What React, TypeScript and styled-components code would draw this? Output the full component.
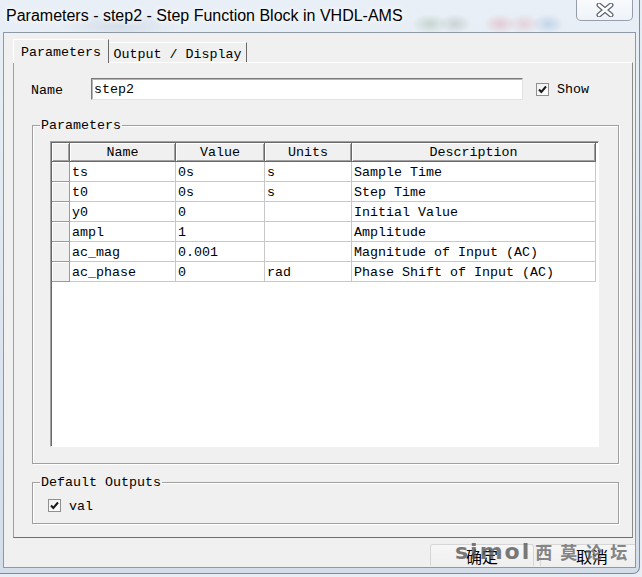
import * as React from "react";
import styled, { createGlobalStyle } from "styled-components";

const MONO = `"Liberation Mono", "DejaVu Sans Mono", monospace`;
const CJK = `"Noto Sans CJK SC", "Liberation Sans", sans-serif`;

const GlobalStyle = createGlobalStyle`
    html, body {
        margin: 0;
        padding: 0;
        background: #dfe7f0;
    }
    body {
        font-family: ${MONO};
        font-size: 13.333px;
        color: #000;
    }
`;

interface ParamRow {
    name: string;
    value: string;
    units: string;
    description: string;
}

const rows: ParamRow[] = [
    { name: "ts", value: "0s", units: "s", description: "Sample Time" },
    { name: "t0", value: "0s", units: "s", description: "Step Time" },
    { name: "y0", value: "0", units: "", description: "Initial Value" },
    { name: "ampl", value: "1", units: "", description: "Amplitude" },
    { name: "ac_mag", value: "0.001", units: "", description: "Magnitude of Input (AC)" },
    { name: "ac_phase", value: "0", units: "rad", description: "Phase Shift of Input (AC)" },
];

const Screen = styled.div`
    width: 642px;
    height: 577px;
    overflow: hidden;
    background: linear-gradient(180deg, #e6edf5 0%, #d9e3ee 40%, #e8eef4 100%);
`;

const Frame = styled.div`
    width: 640px;
    height: 574px;
    box-sizing: border-box;
    display: flex;
    flex-direction: column;
    border-right: 1px solid #7f8c99;
    border-bottom: 1px solid #7f8c99;
    border-bottom-right-radius: 7px;
    background:
        radial-gradient(ellipse 18px 10px at 430px 24px, rgba(110, 150, 110, 0.28), transparent),
        radial-gradient(ellipse 16px 10px at 455px 24px, rgba(100, 115, 100, 0.22), transparent),
        radial-gradient(ellipse 16px 10px at 500px 24px, rgba(215, 120, 135, 0.3), transparent),
        radial-gradient(ellipse 16px 10px at 524px 24px, rgba(215, 130, 145, 0.26), transparent),
        radial-gradient(ellipse 16px 10px at 548px 24px, rgba(90, 140, 200, 0.26), transparent),
        radial-gradient(ellipse 60px 14px at 120px 26px, rgba(150, 170, 195, 0.25), transparent),
        linear-gradient(180deg, #e9eff6 0%, #d3deea 100%);
`;

const TitleBar = styled.div`
    height: 32px;
    display: flex;
    align-items: flex-start;
    flex-shrink: 0;
`;

const Title = styled.div`
    padding-left: 6px;
    line-height: 32px;
    font-family: "Liberation Sans", Arial, sans-serif;
    font-size: 16px;
    color: #000;
    text-shadow: 0 0 6px #fff, 0 0 10px #fff;
    white-space: nowrap;
`;

const CloseButton = styled.div`
    margin-left: auto;
    margin-right: 6px;
    width: 57px;
    height: 21px;
    box-sizing: border-box;
    border: 1px solid rgba(70, 84, 104, 0.55);
    border-top: none;
    border-radius: 0 0 5px 5px;
    background: linear-gradient(180deg, rgba(255, 255, 255, 0.7), rgba(255, 255, 255, 0.3));
    display: flex;
    align-items: center;
    justify-content: center;
`;

const Client = styled.div`
    position: relative;
    margin-left: 3px;
    width: 633px;
    height: 536px;
    box-sizing: border-box;
    border: 1px solid #8d99a6;
    background: #f0f0f0;
    padding: 6px 0 0 9px;
    display: flex;
    flex-direction: column;
    overflow: hidden;
`;

const TabStrip = styled.div`
    height: 23px;
    display: flex;
    align-items: flex-end;
`;

const Tab = styled.div<{ $active?: boolean }>`
    position: relative;
    z-index: 1;
    box-sizing: border-box;
    display: flex;
    justify-content: center;
    align-items: flex-start;
    background: #f0f0f0;
    white-space: nowrap;
    line-height: 16px;
    width: ${(p) => (p.$active ? 96 : 138)}px;
    height: ${(p) => (p.$active ? 24 : 20)}px;
    margin-bottom: ${(p) => (p.$active ? -1 : 0)}px;
    padding-top: ${(p) => (p.$active ? 5 : 4)}px;
    border-top: 1px solid #fff;
    border-left: ${(p) => (p.$active ? "1px solid #fff" : "none")};
    border-right: 1px solid #696969;
`;

const Pane = styled.div`
    width: 620px;
    height: 476px;
    box-sizing: border-box;
    border-top: 1px solid #fff;
    border-left: 1px solid #a0a0a0;
    border-right: 1px solid #8a8a8a;
    border-bottom: 1px solid #6e6e6e;
    padding: 15px 0 0 17px;
    display: flex;
    flex-direction: column;
    flex-shrink: 0;
`;

const NameRow = styled.div`
    display: flex;
    align-items: center;
    height: 22px;
`;

const FieldLabel = styled.div`
    width: 60px;
    padding-top: 3px;
    line-height: 17px;
`;

const TextInput = styled.div`
    width: 432px;
    height: 22px;
    box-sizing: border-box;
    border: 1px solid;
    border-color: #7a7a7a #e3e3e3 #e3e3e3 #7a7a7a;
    box-shadow: inset 1px 1px 0 #b5b5b5;
    background: #fff;
    padding: 2px 0 0 2px;
    line-height: 18px;
`;

const CheckBox = styled.div<{ $gap: number }>`
    width: 13px;
    height: 13px;
    box-sizing: border-box;
    margin-left: ${(p) => p.$gap}px;
    border: 1px solid #8e8f8f;
    background: linear-gradient(135deg, #f0f0f0, #fff);
    display: flex;
    align-items: center;
    justify-content: center;
    flex-shrink: 0;
`;

const CheckLabel = styled.div`
    margin-left: 8px;
    padding-top: 2px;
    line-height: 16px;
`;

const GroupBox = styled.div<{ $bottom: number; $top: number }>`
    margin-left: 1px;
    margin-top: ${(p) => p.$top}px;
    width: 587px;
    box-sizing: border-box;
    border: 1px solid #a0a0a0;
    box-shadow: inset 1px 1px 0 #fff, 1px 1px 0 #fff;
    padding-bottom: ${(p) => p.$bottom}px;
    display: flex;
    flex-direction: column;
`;

const Caption = styled.div`
    align-self: flex-start;
    margin: -9px 0 0 7px;
    padding: 1px 1px 0;
    height: 16px;
    box-sizing: border-box;
    line-height: 16px;
    background: #f0f0f0;
`;

const GridFrame = styled.div`
    margin: 8px 0 0 17px;
    width: 549px;
    height: 306px;
    box-sizing: border-box;
    border: 1px solid;
    border-color: #a0a0a0 #fff #fff #a0a0a0;
    box-shadow: inset 1px 1px 0 #696969;
    padding: 1px 0 0 1px;
    background: #fff;
`;

const Grid = styled.div`
    display: grid;
    grid-template-columns: 18px 106px 89px 87px 244px;
    grid-template-rows: 19px;
    grid-auto-rows: 20px;
`;

const HeadCell = styled.div`
    box-sizing: border-box;
    background: #f0f0f0;
    border-right: 1px solid #696969;
    border-bottom: 1px solid #696969;
    box-shadow: inset 1px 1px 0 #fff, inset -1px -1px 0 #a0a0a0;
    text-align: center;
    padding-top: 2px;
    line-height: 16px;
    white-space: nowrap;
    overflow: hidden;
`;

const RowHead = styled.div`
    box-sizing: border-box;
    background: #f0f0f0;
    border-right: 1px solid #9a9a9a;
    border-bottom: 1px solid #9a9a9a;
    box-shadow: inset 1px 1px 0 #fff;
`;

const Cell = styled.div`
    box-sizing: border-box;
    border-right: 1px solid #c8c8c8;
    border-bottom: 1px solid #c8c8c8;
    padding: 2px 0 0 2px;
    line-height: 17px;
    white-space: nowrap;
    overflow: hidden;
`;

const OutputRow = styled.div`
    display: flex;
    align-items: center;
    margin: 9px 0 0 15px;
    height: 13px;
`;

const ButtonRow = styled.div`
    display: flex;
    gap: 6px;
    margin-top: 6px;
    padding-left: 417px;
`;

const Button = styled.div`
    flex-shrink: 0;
    width: 104px;
    height: 22px;
    box-sizing: border-box;
    border: 1px solid #d6d6d6;
    border-bottom: none;
    border-radius: 3px 3px 0 0;
    background: linear-gradient(180deg, #f6f6f6, #efefef);
    display: flex;
    align-items: flex-start;
    justify-content: center;
    padding-top: 2px;
    font-family: ${CJK};
    font-size: 16px;
    line-height: 18px;
    color: #000;
`;

const Watermark = styled.div`
    position: absolute;
    left: 451px;
    top: 506px;
    display: flex;
    align-items: baseline;
    pointer-events: none;
    opacity: 0.78;
    white-space: nowrap;
`;

const MarkLatin = styled.span`
    font-family: "DejaVu Sans", sans-serif;
    font-weight: bold;
    font-size: 22px;
    letter-spacing: 2px;
    color: #555;
`;

const MarkCjk = styled.span`
    margin-left: 4px;
    font-family: ${CJK};
    font-weight: 700;
    font-size: 17px;
    letter-spacing: 8px;
    color: #666;
`;

const Tick = () => (
    <svg width="11" height="11" viewBox="0 0 11 11">
        <path d="M2 5.5 L4.3 8 L9 2.5" fill="none" stroke="#1a1a1a" strokeWidth="2" />
    </svg>
);

const CloseGlyph = () => (
    <svg width="18" height="14" viewBox="0 0 18 14">
        <path d="M3 2 L15 12 M15 2 L3 12" stroke="#5d6675" strokeWidth="5" strokeLinecap="round" />
        <path d="M3 2 L15 12 M15 2 L3 12" stroke="#fff" strokeWidth="2.6" strokeLinecap="round" />
    </svg>
);

export default function App() {
    return (
        <Screen>
            <GlobalStyle />
            <Frame>
                <TitleBar>
                    <Title>Parameters - step2 - Step Function Block in VHDL-AMS</Title>
                    <CloseButton>
                        <CloseGlyph />
                    </CloseButton>
                </TitleBar>
                <Client>
                    <TabStrip>
                        <Tab $active>Parameters</Tab>
                        <Tab>Output / Display</Tab>
                    </TabStrip>
                    <Pane>
                        <NameRow>
                            <FieldLabel>Name</FieldLabel>
                            <TextInput>step2</TextInput>
                            <CheckBox $gap={13}>
                                <Tick />
                            </CheckBox>
                            <CheckLabel>Show</CheckLabel>
                        </NameRow>

                        <GroupBox $top={25} $bottom={16}>
                            <Caption>Parameters</Caption>
                            <GridFrame>
                                <Grid>
                                    <HeadCell />
                                    <HeadCell>Name</HeadCell>
                                    <HeadCell>Value</HeadCell>
                                    <HeadCell>Units</HeadCell>
                                    <HeadCell>Description</HeadCell>
                                    {rows.map((r) => (
                                        <React.Fragment key={r.name}>
                                            <RowHead />
                                            <Cell>{r.name}</Cell>
                                            <Cell>{r.value}</Cell>
                                            <Cell>{r.units}</Cell>
                                            <Cell>{r.description}</Cell>
                                        </React.Fragment>
                                    ))}
                                </Grid>
                            </GridFrame>
                        </GroupBox>

                        <GroupBox $top={18} $bottom={11}>
                            <Caption>Default Outputs</Caption>
                            <OutputRow>
                                <CheckBox $gap={0}>
                                    <Tick />
                                </CheckBox>
                                <CheckLabel>val</CheckLabel>
                            </OutputRow>
                        </GroupBox>
                    </Pane>
                    <ButtonRow>
                        <Button>确定</Button>
                        <Button>取消</Button>
                    </ButtonRow>
                    <Watermark>
                        <MarkLatin>simol</MarkLatin>
                        <MarkCjk>西莫论坛</MarkCjk>
                    </Watermark>
                </Client>
            </Frame>
        </Screen>
    );
}
